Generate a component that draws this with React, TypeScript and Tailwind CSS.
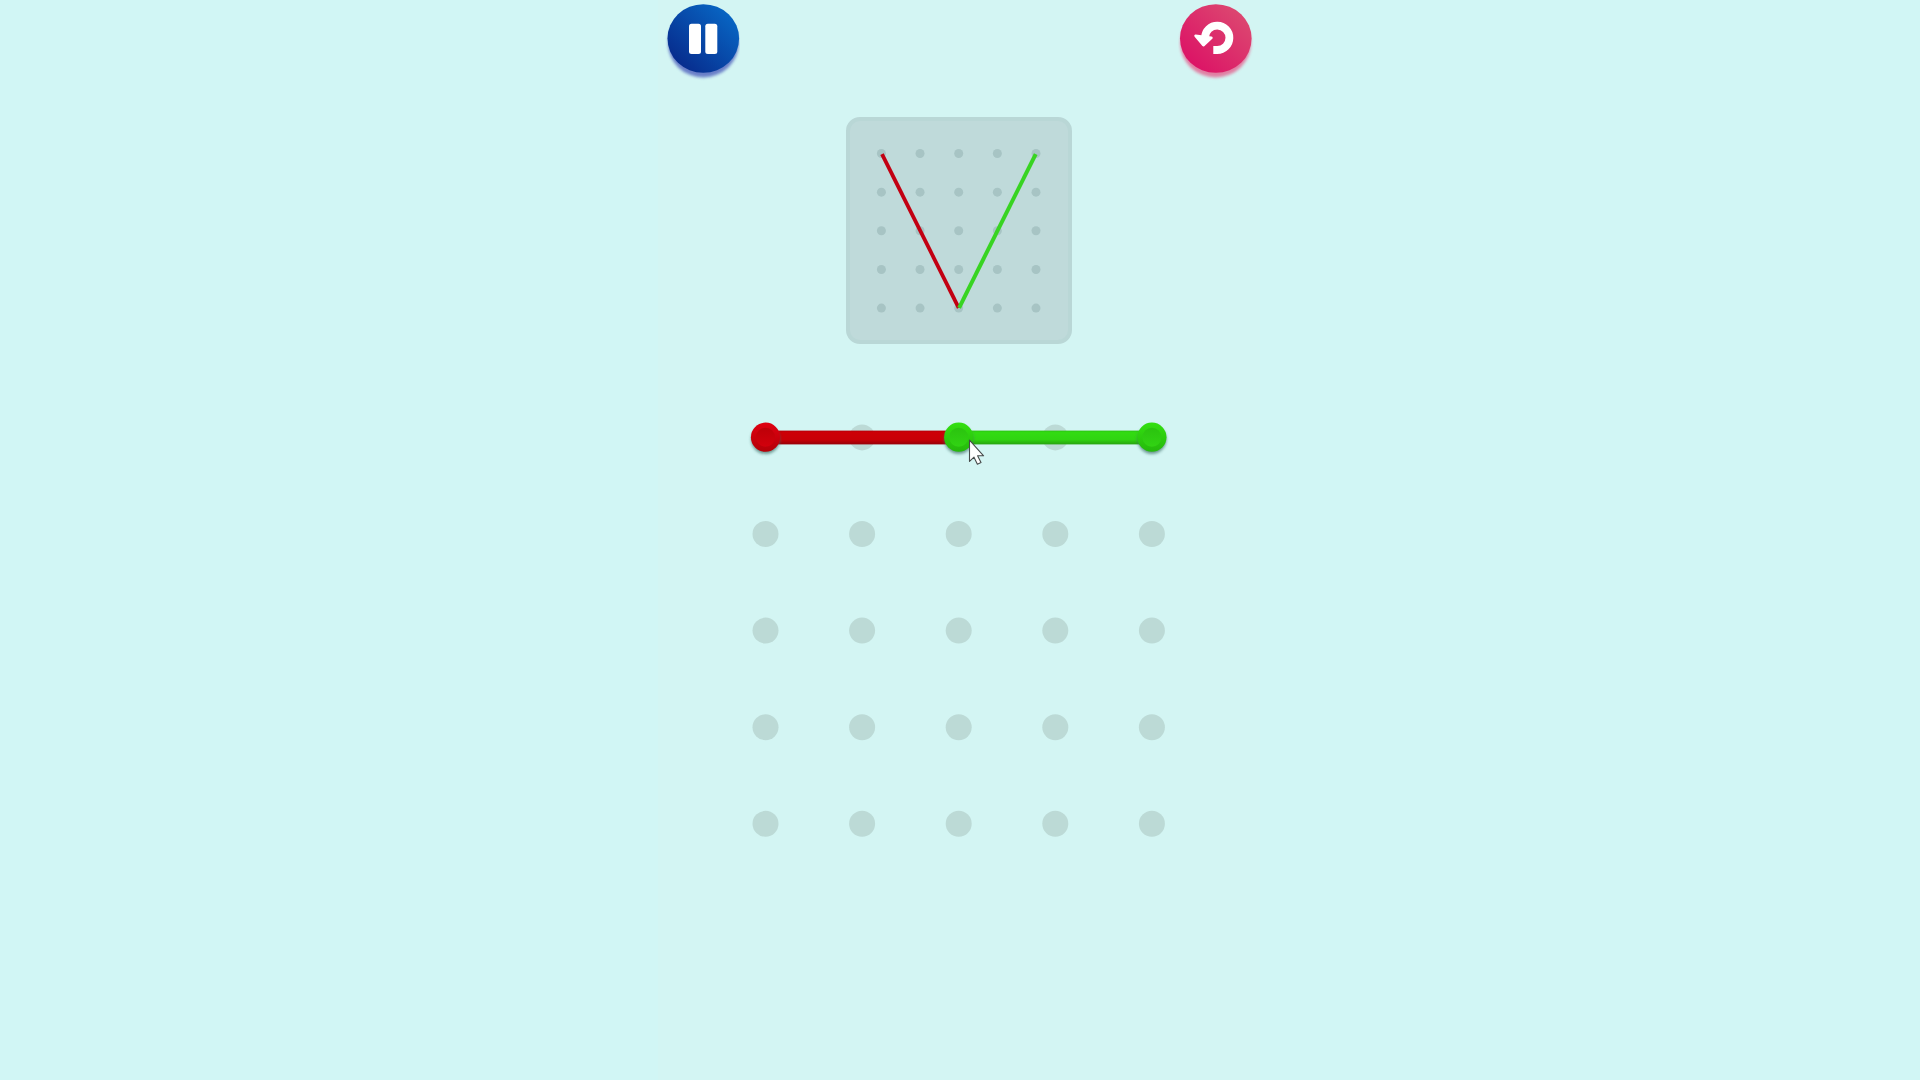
const ROWS = [0, 1, 2, 3, 4];

function Dots({ gap, r, fill }: { gap: number; r: number; fill: string }) {
  return (
    <g fill={fill}>
      {ROWS.map((y) => ROWS.map((x) => <circle key={`${x}-${y}`} cx={x * gap} cy={y * gap} r={r} />))}
    </g>
  );
}

function Peg({ x, y, color }: { x: number; y: number; color: 'red' | 'green' }) {
  return (
    <g transform={`translate(${x} ${y})`}>
      <circle cy="2.4" r="14.4" fill="#3f6f68" opacity="0.7" filter="url(#soft)" />
      <circle r="14.6" fill={`url(#${color}-peg)`} />
      <circle r="9.5" fill={`url(#${color}-dish)`} />
    </g>
  );
}

function Gradient({ id, from, to }: { id: string; from: string; to: string }) {
  return (
    <linearGradient id={id} x1="0" y1="0" x2="0" y2="1">
      <stop offset="0" stopColor={from} />
      <stop offset="1" stopColor={to} />
    </linearGradient>
  );
}

function Target() {
  return (
    <div className="mt-[29px] h-[227px] w-[226px] rounded-[14px] border-4 border-[#b9d7d6] bg-[#bfdada]">
      <svg className="h-[219px] w-[218px]" viewBox="850 121 218 219" aria-hidden="true">
        <g transform="translate(881.4 153.5)">
          <Dots gap={38.65} r={4.5} fill="#a7c4c4" />
          <path d="M0.6 0.6L77.3 154.3" stroke="#c20012" strokeWidth="3.8" />
          <path d="M77.7 154.3L154.3 0.6" stroke="#38d422" strokeWidth="4" />
        </g>
      </svg>
    </div>
  );
}

function Board() {
  return (
    <svg className="mt-[66px] h-[440px] w-[460px]" viewBox="729 410 460 440" aria-hidden="true">
      <defs>
        <filter id="soft" x="-30%" y="-30%" width="160%" height="160%">
          <feGaussianBlur stdDeviation="1.5" />
        </filter>
        <Gradient id="red-peg" from="#df0010" to="#b40008" />
        <Gradient id="red-dish" from="#bd0008" to="#d2000c" />
        <Gradient id="green-peg" from="#33e010" to="#25b80c" />
        <Gradient id="green-dish" from="#2bc30f" to="#31d313" />
        <linearGradient id="red-bar" x1="0" y1="0" x2="0" y2="1">
          <stop offset="0" stopColor="#b80008" />
          <stop offset="0.15" stopColor="#cd0006" />
          <stop offset="0.65" stopColor="#c80006" />
          <stop offset="1" stopColor="#960008" />
        </linearGradient>
        <linearGradient id="green-bar" x1="0" y1="0" x2="0" y2="1">
          <stop offset="0" stopColor="#2cc412" />
          <stop offset="0.15" stopColor="#32dc11" />
          <stop offset="0.65" stopColor="#30d411" />
          <stop offset="1" stopColor="#27a30f" />
        </linearGradient>
      </defs>
      <g transform="translate(765.5 437.4)">
        <Dots gap={96.6} r={13} fill="#bcdad6" />
      </g>
      <rect x="778" y="430.6" width="180" height="13.8" fill="url(#red-bar)" />
      <rect x="958" y="430.6" width="182" height="13.8" fill="url(#green-bar)" />
      <Peg x={765.5} y={437.2} color="red" />
      <Peg x={958.7} y={437.2} color="green" />
      <Peg x={1151.9} y={437.2} color="green" />
      <path
        d="M969.5 440.2V461.4L974 457.2L977.4 464.2L981 462.6L977.6 455.8H983.6Z"
        fill="#fff"
        stroke="#474b4b"
        strokeWidth="1.1"
        strokeLinejoin="round"
      />
    </svg>
  );
}

export default function App() {
  return (
    <div className="flex h-screen justify-center overflow-hidden bg-[#d1f6f5]">
      <main className="mr-0.5 flex w-[602px] flex-col items-center bg-[#d3f5f3]">
        <header className="flex h-[88px] w-[602px] justify-between">
          <button aria-label="Pause" className="-ml-2 h-[88px] w-[90px]">
            <svg className="h-[88px] w-[90px]" viewBox="650 0 90 88">
              <defs>
                <linearGradient id="blue" x1="0.15" y1="0.85" x2="0.85" y2="0.15">
                  <stop offset="0" stopColor="#072d8e" />
                  <stop offset="1" stopColor="#0864c2" />
                </linearGradient>
              </defs>
              <ellipse cx="703.3" cy="43" rx="35.3" ry="34.5" fill="#4f62bd" opacity="0.8" filter="url(#soft)" />
              <ellipse cx="703.3" cy="38.5" rx="35.8" ry="34.3" fill="url(#blue)" />
              <rect x="689" y="23.8" width="12" height="30.2" rx="2.5" fill="#fff" />
              <rect x="705.3" y="23.8" width="12" height="30.2" rx="2.5" fill="#fff" />
            </svg>
          </button>
          <button aria-label="Restart" className="-mr-2 h-[88px] w-[90px]">
            <svg className="h-[88px] w-[90px]" viewBox="1178 0 90 88">
              <defs>
                <linearGradient id="pink" x1="0.15" y1="0.85" x2="0.85" y2="0.15">
                  <stop offset="0" stopColor="#dc1466" />
                  <stop offset="1" stopColor="#dc4670" />
                </linearGradient>
              </defs>
              <ellipse cx="1215.6" cy="43" rx="35.3" ry="34.5" fill="#e4628f" opacity="0.8" filter="url(#soft)" />
              <ellipse cx="1215.8" cy="38.5" rx="35.8" ry="34.3" fill="url(#pink)" />
              <path d="M1205 37.5A12.2 12.2 0 1 1 1217.2 50H1213.3" fill="none" stroke="#fff" strokeWidth="7.8" />
              <path d="M1195.6 35.8L1211.4 37.8L1203.4 45.2Z" fill="#fff" stroke="#fff" strokeWidth="2.6" strokeLinejoin="round" />
            </svg>
          </button>
        </header>
        <Target />
        <Board />
      </main>
    </div>
  );
}
